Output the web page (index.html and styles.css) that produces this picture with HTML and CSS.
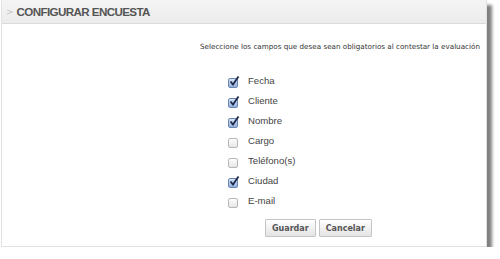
FILE: index.html
```html
<!DOCTYPE html>
<html lang="es">
<head>
    <meta charset="UTF-8">
    <title>Configurar encuesta</title>
    <link rel="stylesheet" href="styles.css">
</head>
<body>
    <div class="panel">
        <header class="panel-header">
            <span class="arrow">&gt;</span>
            <h1>CONFIGURAR ENCUESTA</h1>
        </header>

        <p class="intro">Seleccione los campos que desea sean obligatorios al contestar la evaluación</p>

        <div class="fields">
            <label class="field"><span class="box checked"><svg viewBox="0 0 12 12" width="12" height="12"><path d="M2.5 6.5 L5 9.5 L10.5 1.5" fill="none" stroke="#1d2a4a" stroke-width="1.8"/></svg></span>Fecha</label>
            <label class="field"><span class="box checked"><svg viewBox="0 0 12 12" width="12" height="12"><path d="M2.5 6.5 L5 9.5 L10.5 1.5" fill="none" stroke="#1d2a4a" stroke-width="1.8"/></svg></span>Cliente</label>
            <label class="field"><span class="box checked"><svg viewBox="0 0 12 12" width="12" height="12"><path d="M2.5 6.5 L5 9.5 L10.5 1.5" fill="none" stroke="#1d2a4a" stroke-width="1.8"/></svg></span>Nombre</label>
            <label class="field"><span class="box"></span>Cargo</label>
            <label class="field"><span class="box"></span>Teléfono(s)</label>
            <label class="field"><span class="box checked"><svg viewBox="0 0 12 12" width="12" height="12"><path d="M2.5 6.5 L5 9.5 L10.5 1.5" fill="none" stroke="#1d2a4a" stroke-width="1.8"/></svg></span>Ciudad</label>
            <label class="field"><span class="box"></span>E-mail</label>
        </div>

        <div class="actions">
            <button>Guardar</button>
            <button>Cancelar</button>
        </div>
    </div>
</body>
</html>
```

FILE: styles.css
```css
body {
    margin: 0;
    background-color: white;
    font-family: "DejaVu Sans", Verdana, sans-serif;
    color: #444;
}
.panel {
    width: 484px;
    height: 246px;
    margin-left: 1px;
    border: 1px solid #e2e2e2;
    border-top: none;
    background-color: white;
    box-shadow: 5px 5px 3px rgba(0,0,0,0.5);
}
.panel-header {
    display: flex;
    align-items: center;
    height: 24px;
    padding-left: 4px;
    background: linear-gradient(#f4f4f4, #ececec);
    border-bottom: 1px solid #dadada;
    box-sizing: border-box;
}
.arrow {
    color: #c4c4c4;
    font-size: 9px;
    margin-right: 3px;
}
h1 {
    margin: 0;
    font-family: "Liberation Sans", Arial, sans-serif;
    font-size: 11.6px;
    font-weight: bold;
    letter-spacing: -0.6px;
    color: #555;
}
.intro {
    margin: 18px 6px 0 0;
    text-align: right;
    font-size: 7.2px;
    color: #333;
}
.fields {
    display: flex;
    flex-direction: column;
    margin: 19px 0 0 226px;
}
.field {
    display: flex;
    align-items: center;
    height: 20px;
    font-family: "Liberation Sans", Arial, sans-serif;
    font-size: 9.6px;
    color: #444;
}
.box {
    position: relative;
    width: 8px;
    height: 8px;
    margin: 5px 10px 0 0;
    border: 1px solid #b8b8b8;
    border-radius: 2px;
    background: linear-gradient(#fdfdfd, #e6e6e6);
}
.box.checked {
    border-color: #6d87b3;
    background: linear-gradient(#d4e1f3, #93b1dc);
}
.box svg {
    position: absolute;
    left: -1px;
    top: -4px;
}
.actions {
    display: flex;
    gap: 3px;
    margin: 9px 0 0 263px;
}
button {
    height: 18px;
    padding: 0 6px;
    border: 1px solid #c4c4c4;
    border-radius: 1px;
    background: linear-gradient(#ffffff, #e4e4e4);
    font-family: "DejaVu Sans", Verdana, sans-serif;
    font-size: 8px;
    font-weight: bold;
    color: #555;
}
```
